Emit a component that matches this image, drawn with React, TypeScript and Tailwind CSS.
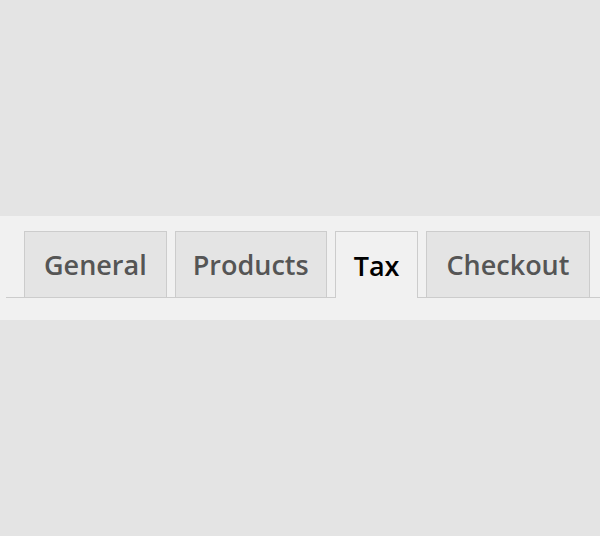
const tabs = [
  { label: 'General', pad: 'px-[19px]' },
  { label: 'Products', pad: 'px-[17px]' },
  { label: 'Tax', pad: 'px-[18px]' },
  { label: 'Checkout', pad: 'pl-[19px] pr-[20px]' },
];

export default function App() {
  const active = 'Tax';
  return (
    <div className="h-[536px] w-[600px] bg-[#e4e4e4] pt-[216px] font-['Open_Sans',sans-serif]">
      <div className="h-[104px] bg-[#f1f1f1] pt-[15px] pl-[6px]">
        <nav className="flex gap-2 border-b border-[#cccccc] pl-[18px]">
          {tabs.map((tab) => (
            <div
              key={tab.label}
              className={
                tab.label === active
                  ? `-mb-px flex h-[67px] items-center border border-b-0 border-[#cccccc] bg-[#f1f1f1] pt-[2px] text-[27px] font-semibold text-black ${tab.pad}`
                  : `flex h-[66px] items-center border border-b-0 border-[#cccccc] bg-[#e4e4e4] pt-[2px] text-[27px] font-semibold text-[#555555] ${tab.pad}`
              }
            >
              {tab.label}
            </div>
          ))}
        </nav>
      </div>
    </div>
  );
}
